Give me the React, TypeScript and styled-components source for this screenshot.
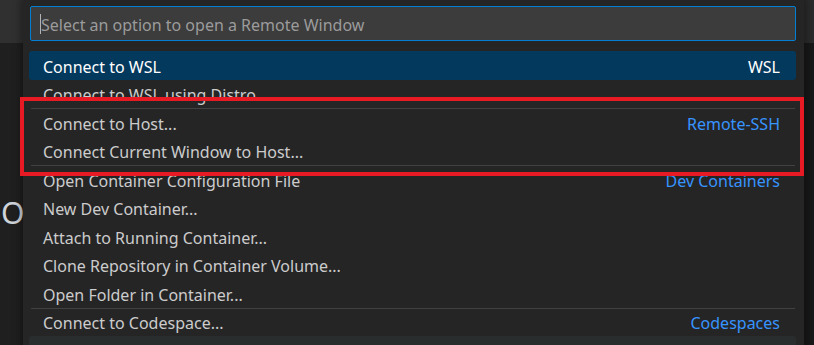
import React from "react";
import styled, { createGlobalStyle } from "styled-components";

const GlobalStyle = createGlobalStyle`
  html, body { margin: 0; padding: 0; background: #1f1f1f; }
  * { box-sizing: border-box; }
`;

const Page = styled.div`
  position: relative;
  width: 814px;
  height: 345px;
  overflow: hidden;
  display: flex;
  flex-direction: column;
  font-family: "Noto Sans", "Open Sans", sans-serif;
`;

const TitleBar = styled.div`
  height: 43px;
  flex: none;
  display: flex;
`;

const TitleLeft = styled.div`
  flex: 1;
  background: #303030;
`;

const TitleRight = styled.div`
  width: 10px;
  background: #2b2b2b;
`;

const Workbench = styled.div`
  flex: 1;
  display: flex;
`;

const Editor = styled.div`
  flex: 1;
  background: #1f1f1f;
  padding: 155px 0 0 1px;
`;

const WelcomeTitle = styled.div`
  font-size: 30px;
  line-height: 30px;
  color: #cfd3da;
  white-space: nowrap;
`;

const SideStrip = styled.div`
  width: 10px;
  background: #181818;
`;

const QuickPick = styled.div`
  position: absolute;
  left: 23px;
  top: 0;
  width: 781px;
  height: 380px;
  background: #252526;
  box-shadow: 0 0 8px 2px rgba(0, 0, 0, 0.36);
  padding: 6px 8px 0 7px;
  display: flex;
  flex-direction: column;
`;

const InputBox = styled.div`
  flex: none;
  height: 35px;
  background: #3c3c3c;
  border: 1px solid #007fd4;
  border-radius: 2px;
  display: flex;
  align-items: center;
  padding: 2px 0 0 9px;
`;

const Caret = styled.span`
  width: 1px;
  height: 20px;
  background: #b4b4b4;
  flex: none;
  margin-top: -2px;
`;

const Placeholder = styled.span`
  font-size: 16px;
  color: #9b9b9b;
  white-space: nowrap;
`;

const List = styled.div`
  flex: none;
  margin: 10px 0 0 -1px;
  display: flex;
  flex-direction: column;
`;

const Row = styled.div<{ $selected?: boolean; $hover?: boolean; $separator?: boolean }>`
  position: relative;
  height: 28.5px;
  flex: none;
  display: flex;
  align-items: center;
  justify-content: space-between;
  padding: 3px 16px 0 14px;
  border-radius: 3px;
  font-size: 16px;
  white-space: nowrap;
  color: ${(p) => (p.$selected ? "#ffffff" : "#cccccc")};
  background: ${(p) => (p.$selected ? "#04395e" : p.$hover ? "#2a2d2e" : "transparent")};

  &::before {
    content: "";
    display: ${(p) => (p.$separator ? "block" : "none")};
    position: absolute;
    left: 2px;
    right: 1px;
    top: 0;
    height: 1px;
    background: #414141;
  }
`;

const Label = styled.span``;

const Group = styled.span<{ $selected?: boolean }>`
  color: ${(p) => (p.$selected ? "#ffffff" : "#3794ff")};
`;

const Highlight = styled.div`
  position: absolute;
  left: 20px;
  top: 97px;
  width: 784px;
  height: 79px;
  border: 4px solid #e81a24;
  pointer-events: none;
`;

type Item = { label: string; group?: string; separator?: boolean; selected?: boolean; hover?: boolean };

const items: Item[] = [
  { label: "Connect to WSL", group: "WSL", selected: true },
  { label: "Connect to WSL using Distro" },
  { label: "Connect to Host...", group: "Remote-SSH", separator: true },
  { label: "Connect Current Window to Host..." },
  { label: "Open Container Configuration File", group: "Dev Containers", separator: true },
  { label: "New Dev Container..." },
  { label: "Attach to Running Container..." },
  { label: "Clone Repository in Container Volume..." },
  { label: "Open Folder in Container..." },
  { label: "Connect to Codespace...", group: "Codespaces", separator: true },
  { label: "", hover: true },
];

export default function App() {
  return (
    <>
      <GlobalStyle />
      <Page>
        <TitleBar>
          <TitleLeft />
          <TitleRight />
        </TitleBar>
        <Workbench>
          <Editor>
            <WelcomeTitle>O</WelcomeTitle>
          </Editor>
          <SideStrip />
        </Workbench>
        <QuickPick>
          <InputBox>
            <Caret />
            <Placeholder>Select an option to open a Remote Window</Placeholder>
          </InputBox>
          <List>
            {items.map((it, i) => (
              <Row key={i} $selected={it.selected} $hover={it.hover} $separator={it.separator}>
                <Label>{it.label}</Label>
                {it.group && <Group $selected={it.selected}>{it.group}</Group>}
              </Row>
            ))}
          </List>
        </QuickPick>
        <Highlight />
      </Page>
    </>
  );
}
